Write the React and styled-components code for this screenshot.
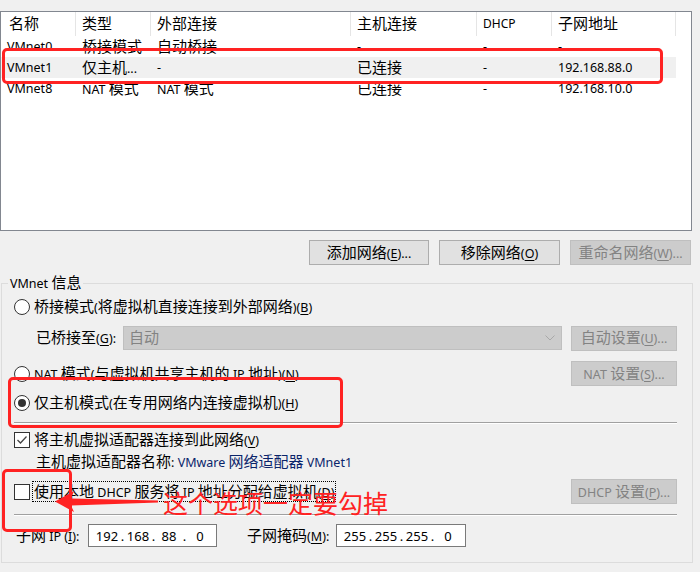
import React from 'react';
import styled, { createGlobalStyle } from 'styled-components';

const GlobalStyle = createGlobalStyle`
  html, body {
    margin: 0;
    padding: 0;
    background: #f0f0f0;
  }
  body {
    font-family: "Noto Sans", "Noto Sans CJK SC", sans-serif;
    font-size: 12.5px;
    color: #000;
  }
`;

const CJK_RE = /([\u2e80-\u9fff\u3000-\u303f\uff00-\uffef]+)/;

const Cjk = styled.span`
  font-family: "Noto Sans CJK SC", sans-serif;
  font-size: ${(p) => p.$size || 15}px;
`;

// splits a string so Chinese runs get the larger CJK face, like Windows font linking
const Mixed = ({ text }) => (
  <span>
    {text.split(CJK_RE).map((part, i) =>
      part === '' ? null : CJK_RE.test(part) ? <Cjk key={i}>{part}</Cjk> : <span key={i}>{part}</span>
    )}
  </span>
);

const Acc = styled.span`
  text-decoration: underline;
  text-underline-offset: 2px;
`;

const Label = ({ text, k, after = '' }) => (
  <span>
    <Mixed text={text} />(<Acc>{k}</Acc>){after}
  </span>
);

const Page = styled.div`
  position: relative;
  width: 700px;
  height: 572px;
  padding-top: 11px;
  box-sizing: border-box;
  overflow: hidden;
  line-height: 20px;
`;

const ListBox = styled.div`
  width: 692px;
  height: 220px;
  box-sizing: border-box;
  border: 1px solid #828790;
  background: #fff;
`;

const cols = '75px 75px 200px 126px 75px 124px';

const HeaderRow = styled.div`
  display: grid;
  grid-template-columns: ${cols};
  height: 24px;
`;

const HeadCell = styled.div`
  display: flex;
  align-items: center;
  padding-left: ${(p) => (p.$first ? 8 : 6)}px;
  border-right: 1px solid #e5e5e5;
  font-size: ${(p) => (p.$small ? 12 : 12.5)}px;
`;

const Row = styled.div`
  display: grid;
  grid-template-columns: ${cols};
  width: 675px;
  height: 21px;
  align-items: center;
  background: ${(p) => (p.$selected ? '#f0f0f0' : 'transparent')};
`;

const Cell = styled.div`
  padding-left: 6px;
  white-space: nowrap;
  overflow: hidden;
`;

const ButtonBar = styled.div`
  display: flex;
  justify-content: flex-end;
  gap: 10px;
  margin-top: 9px;
  padding-right: 9px;
`;

const Button = styled.div`
  display: flex;
  align-items: center;
  justify-content: center;
  width: ${(p) => p.$w || 120}px;
  height: 25px;
  box-sizing: border-box;
  border: 1px solid ${(p) => (p.$disabled ? '#bfbfbf' : '#adadad')};
  background: ${(p) => (p.$disabled ? '#cccccc' : '#e1e1e1')};
  color: ${(p) => (p.$disabled ? '#838383' : '#000')};
  white-space: nowrap;
  flex: none;
`;

const Group = styled.fieldset`
  margin: 8px 0 0 1px;
  width: 692px;
  height: 290px;
  box-sizing: border-box;
  border: 1px solid #dcdcdc;
  padding: 0 15px 0 12px;
  min-inline-size: 0;
`;

const Legend = styled.legend`
  padding: 0 2px;
  margin-left: -6px;
  line-height: 18px;
`;

const OptionRow = styled.div`
  display: flex;
  align-items: center;
  height: ${(p) => p.$h || 22}px;
  margin-top: ${(p) => p.$mt || 0}px;
  padding-left: ${(p) => p.$indent || 0}px;
  white-space: nowrap;
`;

const Spacer = styled.div`
  flex: 1;
`;

const RadioCircle = styled.span`
  position: relative;
  width: 16px;
  height: 16px;
  box-sizing: border-box;
  border-radius: 50%;
  border: 1px solid #333;
  background: #fff;
  flex: none;
  margin-right: 4px;

  &::after {
    content: '';
    display: ${(p) => (p.$checked ? 'block' : 'none')};
    position: absolute;
    left: 3px;
    top: 3px;
    width: 8px;
    height: 8px;
    border-radius: 50%;
    background: #333;
  }
`;

const CheckBox = styled.span`
  display: flex;
  align-items: center;
  justify-content: center;
  width: 16px;
  height: 16px;
  box-sizing: border-box;
  border: 1px solid #333;
  background: #fff;
  flex: none;
  margin-right: 4px;
`;

const Focus = styled.span`
  border: 1px dotted #000;
  padding: 0 1px;
  line-height: 17px;
  margin-left: -2px;
`;

const FieldLabel = styled.span`
  width: ${(p) => p.$w}px;
  margin-left: ${(p) => p.$ml || 0}px;
  flex: none;
  white-space: nowrap;
`;

const Select = styled.div`
  flex: 1;
  height: 24px;
  box-sizing: border-box;
  border: 1px solid #bfbfbf;
  background: #cccccc;
  color: #838383;
  display: flex;
  align-items: center;
  padding: 0 6px 0 5px;
  margin-right: 9px;
`;

const Separator = styled.div`
  margin-top: ${(p) => p.$mt}px;
  border-top: 1px solid #a0a0a0;
  border-bottom: 1px solid #ffffff;
`;

const AdapterValue = styled.span`
  color: #0a246a;
`;

const IpField = styled.div`
  display: flex;
  align-items: center;
  width: ${(p) => p.$w}px;
  height: 23px;
  box-sizing: border-box;
  border: 1px solid #7a7a7a;
  background: #fff;
  padding-left: 6px;
  font-size: 13px;
  flex: none;
`;

const Octet = styled.span`
  width: 24px;
  text-align: center;
`;

const Dot = styled.span`
  width: 7px;
  text-align: center;
`;

const RedBox = styled.div`
  position: absolute;
  left: ${(p) => p.$x}px;
  top: ${(p) => p.$y}px;
  width: ${(p) => p.$w}px;
  height: ${(p) => p.$h}px;
  box-sizing: border-box;
  border: 3px solid #ff2222;
  border-radius: 5px;
  pointer-events: none;
`;

const Arrow = styled.svg`
  position: absolute;
  left: 40px;
  top: 480px;
`;

const Note = styled.div`
  position: absolute;
  left: 163px;
  top: 487px;
  font-family: "Noto Sans CJK SC", sans-serif;
  font-size: 25px;
  line-height: 30px;
  color: #ff2222;
  white-space: nowrap;
`;

const columns = ['名称', '类型', '外部连接', '主机连接', 'DHCP', '子网地址'];

const rows = [
  ['VMnet0', '桥接模式', '自动桥接', '-', '-', '-'],
  ['VMnet1', '仅主机...', '-', '已连接', '-', '192.168.88.0'],
  ['VMnet8', 'NAT 模式', 'NAT 模式', '已连接', '-', '192.168.10.0'],
];

const Ip = ({ parts, w }) => (
  <IpField $w={w}>
    {parts.map((p, i) => (
      <React.Fragment key={i}>
        <Octet>{p}</Octet>
        {i < parts.length - 1 && <Dot>.</Dot>}
      </React.Fragment>
    ))}
  </IpField>
);

const App = () => (
  <>
    <GlobalStyle />
    <Page>
      <ListBox>
        <HeaderRow>
          {columns.map((c, i) => (
            <HeadCell key={c} $first={i === 0} $small={c === 'DHCP'}>
              <Mixed text={c} />
            </HeadCell>
          ))}
        </HeaderRow>
        {rows.map((r, i) => (
          <Row key={r[0]} $selected={i === 1}>
            {r.map((v, j) => (
              <Cell key={j}>
                <Mixed text={v} />
              </Cell>
            ))}
          </Row>
        ))}
      </ListBox>

      <ButtonBar>
        <Button $w={120}>
          <Label text="添加网络" k="E" after="..." />
        </Button>
        <Button $w={121}>
          <Label text="移除网络" k="O" />
        </Button>
        <Button $w={121} $disabled>
          <Label text="重命名网络" k="W" after="..." />
        </Button>
      </ButtonBar>

      <Group>
        <Legend>
          <Mixed text="VMnet 信息" />
        </Legend>

        <OptionRow $mt={3}>
          <RadioCircle />
          <Label text="桥接模式(将虚拟机直接连接到外部网络)" k="B" />
        </OptionRow>

        <OptionRow $mt={8} $h={24} $indent={22}>
          <FieldLabel $w={87}>
            <Label text="已桥接至" k="G" after=":" />
          </FieldLabel>
          <Select>
            <Mixed text="自动" />
            <Spacer />
            <svg width="10" height="6" viewBox="0 0 10 6">
              <polyline points="0.5,0.5 5,5 9.5,0.5" fill="none" stroke="#a8a8a8" strokeWidth="1" />
            </svg>
          </Select>
          <Button $w={106} $disabled>
            <Label text="自动设置" k="U" after="..." />
          </Button>
        </OptionRow>

        <OptionRow $mt={11} $h={25}>
          <RadioCircle />
          <Label text="NAT 模式(与虚拟机共享主机的 IP 地址)" k="N" />
          <Spacer />
          <Button $w={106} $disabled>
            <Label text="NAT 设置" k="S" after="..." />
          </Button>
        </OptionRow>

        <OptionRow $mt={6}>
          <RadioCircle $checked />
          <Label text="仅主机模式(在专用网络内连接虚拟机)" k="H" />
        </OptionRow>

        <Separator $mt={8} />

        <OptionRow $mt={5}>
          <CheckBox>
            <svg width="12" height="12" viewBox="0 0 12 12">
              <polyline points="1.5,6 4.5,9 10.5,2.5" fill="none" stroke="#444" strokeWidth="1.3" />
            </svg>
          </CheckBox>
          <Label text="将主机虚拟适配器连接到此网络" k="V" />
        </OptionRow>

        <OptionRow $indent={22}>
          <span>
            <Mixed text="主机虚拟适配器名称: " />
            <AdapterValue>
              <Mixed text="VMware 网络适配器 VMnet1" />
            </AdapterValue>
          </span>
        </OptionRow>

        <OptionRow $mt={6} $h={25}>
          <CheckBox />
          <Focus>
            <Label text="使用本地 DHCP 服务将 IP 地址分配给虚拟机" k="D" />
          </Focus>
          <Spacer />
          <Button $w={106} $disabled>
            <Label text="DHCP 设置" k="P" after="..." />
          </Button>
        </OptionRow>

        <Separator $mt={10} />

        <OptionRow $mt={8} $h={23}>
          <FieldLabel $w={72} $ml={2}>
            <Label text="子网 IP " k="I" after=":" />
          </FieldLabel>
          <Ip parts={['192', '168', '88', '0']} w={129} />
          <FieldLabel $w={89} $ml={30}>
            <Label text="子网掩码" k="M" after=":" />
          </FieldLabel>
          <Ip parts={['255', '255', '255', '0']} w={130} />
        </OptionRow>
      </Group>

      <RedBox $x={2} $y={48} $w={661} $h={36} />
      <RedBox $x={8} $y={377} $w={335} $h={51} />
      <RedBox $x={2} $y={469} $w={70} $h={63} />
      <Arrow width="125" height="40" viewBox="0 0 125 40">
        <polygon points="15,21.5 34,11 31,18.5 118,20.5 118,22.5 31,25.5 34,32" fill="#ff2222" />
      </Arrow>
      <Note>这个选项一定要勾掉</Note>
    </Page>
  </>
);

export default App;
